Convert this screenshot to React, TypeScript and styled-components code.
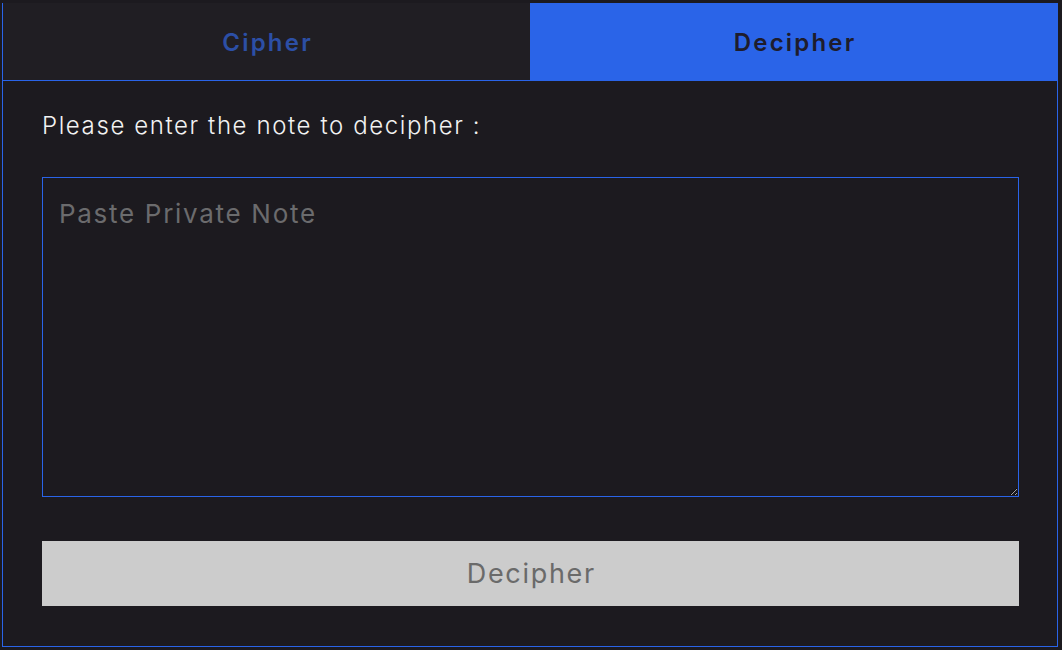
import React, { useState } from "react"
import styled, { createGlobalStyle } from "styled-components"

const GlobalStyle = createGlobalStyle`
  html, body {
    margin: 0;
    padding: 0;
    background: #1c1a1f;
    font-family: "Inter", "Open Sans", sans-serif;
  }
  * { box-sizing: border-box; }
`

const Page = styled.div`
  padding: 3px 4px 3px 2px;
  height: 650px;
`

const Frame = styled.div`
  border: 1px solid #2a64e8;
  height: 644px;
  display: flex;
  flex-direction: column;
  background: #1c1a1f;
`

const Tabs = styled.div`
  display: grid;
  grid-template-columns: 527px 1fr;
  height: 78px;
  margin: -1px -1px 0 0;
  border-bottom: 1px solid #2a64e8;
`

const Tab = styled.button<{ active?: boolean }>`
  border: none;
  margin: 0;
  font-family: inherit;
  font-size: 24px;
  font-weight: 600;
  letter-spacing: 2.2px;
  padding: 2px 0 0 2.2px;
  cursor: pointer;
  background: ${p => (p.active ? "#2a64e8" : "#201e23")};
  color: ${p => (p.active ? "#1e1c2c" : "#2c4fa6")};
`

const Body = styled.div`
  padding: 30px 38px 0 39px;
  display: flex;
  flex-direction: column;
`

const Label = styled.p`
  margin: 0;
  color: #f2f2f2;
  font-size: 24px;
  font-weight: 300;
  letter-spacing: 1.6px;
  line-height: 30px;
`

const NoteInput = styled.textarea`
  display: block;
  margin-top: 36px;
  height: 320px;
  width: 100%;
  background: transparent;
  border: 1px solid #2a64e8;
  border-radius: 0;
  color: #e0e0e0;
  font-family: inherit;
  font-size: 26px;
  letter-spacing: 1.7px;
  padding: 20px 16px;
  outline: none;
  &::placeholder {
    color: #6b6b6d;
  }
`

const SubmitButton = styled.button`
  margin-top: 44px;
  height: 65px;
  border: none;
  background: #cccccc;
  color: #6a6a6a;
  font-family: inherit;
  font-size: 27px;
  font-weight: 400;
  letter-spacing: 1.7px;
  padding: 0 0 0 1.7px;
`

export default function App() {
  const [mode, setMode] = useState<"cipher" | "decipher">("decipher")
  const [note, setNote] = useState("")

  return (
    <Page>
      <GlobalStyle />
      <Frame>
        <Tabs>
          <Tab active={mode === "cipher"} onClick={() => setMode("cipher")}>
            Cipher
          </Tab>
          <Tab active={mode === "decipher"} onClick={() => setMode("decipher")}>
            Decipher
          </Tab>
        </Tabs>
        <Body>
          <Label>Please enter the note to decipher :</Label>
          <NoteInput
            placeholder="Paste Private Note"
            value={note}
            onChange={e => setNote(e.target.value)}
          />
          <SubmitButton>Decipher</SubmitButton>
        </Body>
      </Frame>
    </Page>
  )
}
